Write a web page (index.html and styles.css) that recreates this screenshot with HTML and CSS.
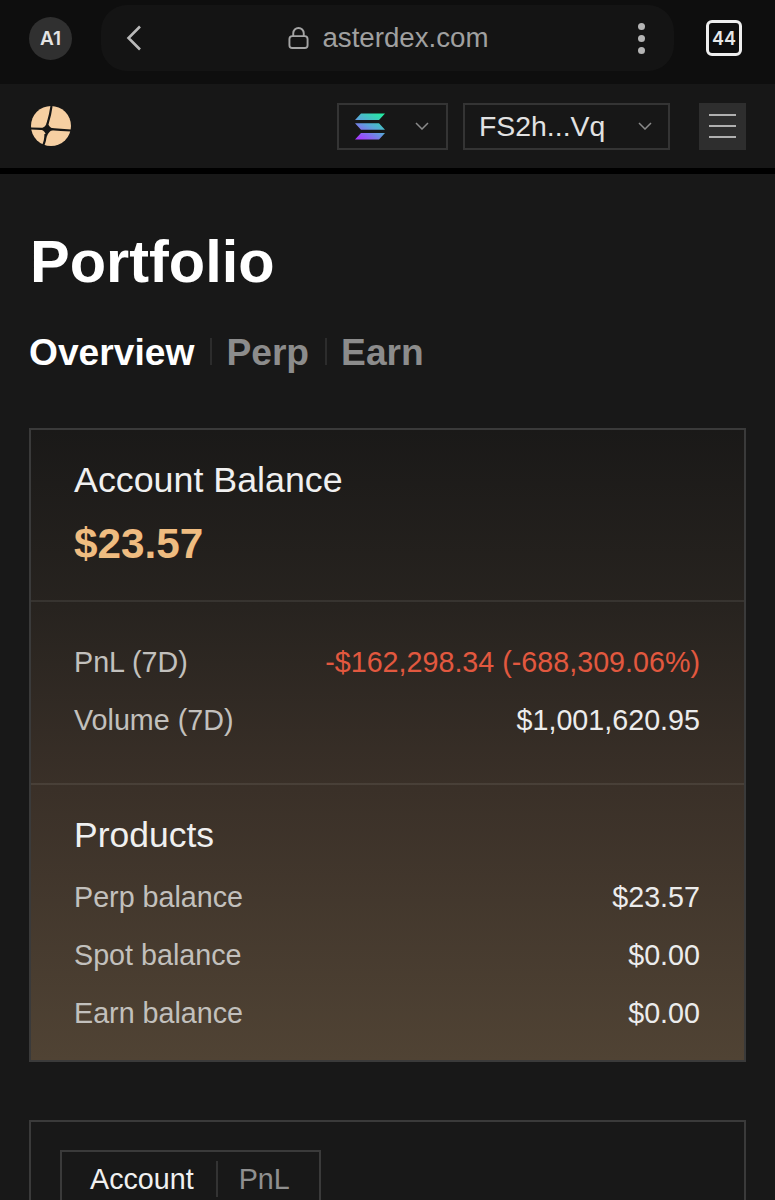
FILE: index.html
```html
<!DOCTYPE html>
<html lang="en">
<head>
<meta charset="utf-8">
<title>Portfolio</title>
<link rel="stylesheet" href="styles.css">
</head>
<body>
<header class="browser">
  <div class="avatar">A1</div>
  <div class="urlbar">
    <svg class="back" width="18" height="28" viewBox="0 0 18 28"><path d="M15 2.500 3.500 14 15 25.500" fill="none" stroke="#b9b9b9" stroke-width="2.600"/></svg>
    <div class="url">
      <svg width="21" height="24" viewBox="0 0 22 24"><rect x="1.500" y="10" width="19" height="12.500" rx="3" fill="none" stroke="#a5a5a5" stroke-width="2"/><path d="M5.500 10V7a5.500 5.500 0 0 1 11 0v3" fill="none" stroke="#a5a5a5" stroke-width="2"/></svg>
      <span>asterdex.com</span>
    </div>
    <div class="dots"><i></i><i></i><i></i></div>
  </div>
  <div class="tabs">44</div>
</header>
<nav class="topnav">
  <svg class="logo" width="40" height="40" viewBox="0 0 40 40">
    <circle cx="20" cy="20" r="20" fill="#f6cfa2"/>
    <path d="M20.500 0C19.500 8 18 13 16.500 18M0 22.500C6 22.500 9 22.800 12 23M20 23.200C27 23.600 33 24 40 24.500M14.500 28C14.500 33 14 36 12 39.500" stroke="#161616" stroke-width="2.200" fill="none"/>
    <path d="M16.500 14C17 20 19 22.500 25 23.300 19.500 24 17 26.500 15.500 32 15 26.500 13 24 7.500 23 13 22 15.500 20 16.500 14Z" fill="#161616"/>
  </svg>
  <div class="nav-actions">
    <div class="select chain">
      <svg width="30" height="27" viewBox="0 0 30 26">
        <defs><linearGradient id="sol" x1="0.900" y1="0" x2="0.200" y2="1"><stop offset="0" stop-color="#22eea0"/><stop offset=".5" stop-color="#58a8d8"/><stop offset="1" stop-color="#a53cff"/></linearGradient></defs>
        <path d="M6 0H30L24 6.500H0ZM0 9.800H24L30 16.200H6ZM6 19.500H30L24 26H0Z" fill="url(#sol)"/>
      </svg>
      <svg class="chev" width="14" height="8" viewBox="0 0 14 8"><path d="M1 1 7 7 13 1" fill="none" stroke="#8a8a8a" stroke-width="1.500"/></svg>
    </div>
    <div class="select wallet">
      <span>FS2h...Vq</span>
      <svg class="chev" width="14" height="8" viewBox="0 0 14 8"><path d="M1 1 7 7 13 1" fill="none" stroke="#8a8a8a" stroke-width="1.500"/></svg>
    </div>
    <div class="menu"><i></i><i></i><i></i></div>
  </div>
</nav>
<div class="rule"></div>
<main class="page">
  <h1>Portfolio</h1>
  <div class="section-tabs">
    <span class="active">Overview</span><span>Perp</span><span>Earn</span>
  </div>
  <section class="card balance">
    <div class="block head">
      <div class="label-lg">Account Balance</div>
      <div class="amount">$23.57</div>
    </div>
    <div class="block stats">
      <div class="row"><span class="key">PnL (7D)</span><span class="neg">-$162,298.34 (-688,309.06%)</span></div>
      <div class="row"><span class="key">Volume (7D)</span><span>$1,001,620.95</span></div>
    </div>
    <div class="block products">
      <div class="label-md">Products</div>
      <div class="row"><span class="key">Perp balance</span><span>$23.57</span></div>
      <div class="row"><span class="key">Spot balance</span><span>$0.00</span></div>
      <div class="row"><span class="key">Earn balance</span><span>$0.00</span></div>
    </div>
  </section>
  <section class="card chart">
    <div class="toggle"><span class="on">Account</span><span>PnL</span></div>
  </section>
</main>
</body>
</html>
```
FILE: styles.css
```css
* { box-sizing: border-box; }
html, body { margin: 0; height: 1200px; overflow: hidden; }
body { background: #181818; color: #f2f2f2; font-family: "Liberation Sans", Arial, sans-serif; }

.browser { height: 84px; background: #0e0e0e; display: flex; align-items: center; padding: 0 32px 8px 29px; }
.avatar { width: 43px; height: 43px; border-radius: 50%; background: #303030; color: #e4e4e4; font: 600 19px "Inter", sans-serif; display: flex; align-items: center; justify-content: center; }
.urlbar { width: 573px; height: 66px; margin-left: 29px; border-radius: 26px; background: #141414; display: flex; align-items: center; padding: 0 29px 0 24px; }
.url { flex: 1; display: flex; justify-content: center; align-items: center; gap: 13px; color: #a0a0a0; font-size: 27.700px; margin-right: 4px; }
.dots { display: flex; flex-direction: column; gap: 5px; }
.dots i { width: 7px; height: 7px; border-radius: 50%; background: #b5b5b5; }
.tabs { width: 36px; height: 36px; margin-left: 32px; border: 3px solid #eee; border-radius: 6px; color: #e8e8e8; font: 600 18px "Inter", sans-serif; display: flex; align-items: center; justify-content: center; }

.topnav { height: 84px; background: #171717; display: flex; align-items: center; justify-content: space-between; padding: 0 29px 0 31px; }
.nav-actions { display: flex; align-items: center; gap: 15px; }
.select { height: 47px; border: 2px solid #343434; display: flex; align-items: center; justify-content: space-between; }
.chain { width: 111px; padding: 0 17px 0 16px; }
.wallet { width: 207px; padding: 0 16px 0 14px; font-size: 28.400px; color: #e2e2e2; }
.menu { width: 47px; height: 47px; margin-left: 14px; background: #2e2e2e; display: flex; flex-direction: column; align-items: center; justify-content: center; gap: 9px; }
.menu i { width: 27px; height: 2px; background: #b0b0b0; }
.rule { height: 6px; background: #000; }

.page { padding: 0 29px 0 30px; }
h1 { margin: 54px 0 0; font-size: 59.500px; line-height: 68px; font-weight: 700; color: #fff; }
.section-tabs { display: flex; margin-top: 34px; margin-left: -1px; font-size: 37.200px; line-height: 44px; font-weight: 700; color: #8c8c8c; }
.section-tabs span { padding: 0 16px; position: relative; }
.section-tabs span:first-child { padding-left: 0; }
.section-tabs span + span::before { content: ""; position: absolute; left: 0; top: 8px; height: 27px; width: 2px; background: #2c2c2c; }
.section-tabs .active { color: #fff; }

.card { border: 2px solid #3a3a3a; margin-top: 54px; margin-left: -1px; }
.balance { height: 634px; display: flex; flex-direction: column; background: linear-gradient(180deg, #1a1918 0%, #27231f 28%, #3a3028 57%, #504334 100%); font-size: 28.700px; }
.block { padding: 0 44px 0 43px; border-bottom: 2px solid rgba(255, 255, 255, .08); }
.block:last-child { border-bottom: 0; }
.head { height: 172px; padding-top: 28px; }
.label-lg { font-size: 35.800px; line-height: 44px; color: #f0f0f0; }
.amount { margin-top: 17px; font-size: 42.300px; line-height: 50px; font-weight: 700; color: #efbc80; }
.stats { height: 183px; padding-top: 44px; display: flex; flex-direction: column; gap: 26px; }
.products { flex: 1; padding-top: 29px; display: flex; flex-direction: column; gap: 26px; }
.label-md { font-size: 35.500px; line-height: 42px; color: #f0f0f0; margin-bottom: -1px; }
.row { display: flex; justify-content: space-between; line-height: 32px; color: #ececec; }
.key { color: #c2c0bd; }
.neg { color: #e2583f; }

.chart { margin-top: 58px; height: 200px; padding: 28px 29px; }
.toggle { display: inline-flex; border: 2px solid #3a3a3a; height: 70px; padding-top: 9px; font-size: 28.700px; color: #8f8f8f; }
.toggle span { height: 36px; line-height: 36px; }
.toggle span + span { border-left: 2px solid #333; padding: 0 29px 0 21px; }
.toggle .on { color: #f0f0f0; padding: 0 22px 0 28px; }
```
